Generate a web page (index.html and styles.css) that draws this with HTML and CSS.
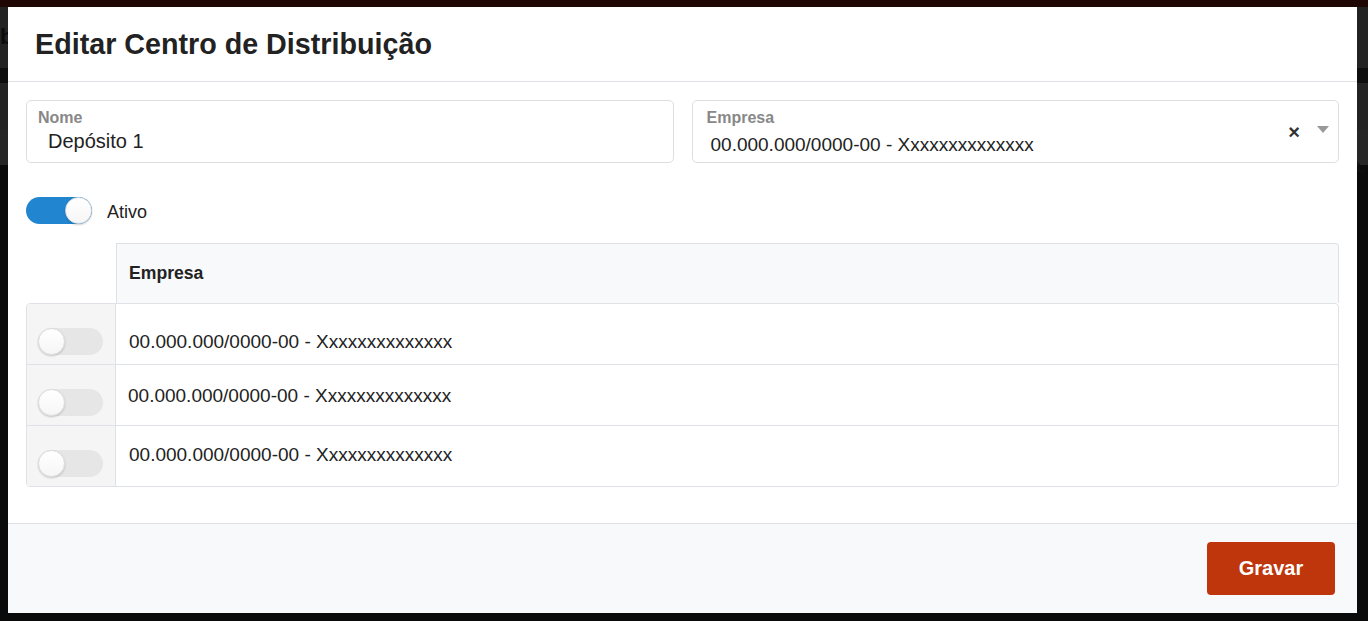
FILE: index.html
```html
<!DOCTYPE html>
<html lang="pt-BR">
<head>
  <meta charset="UTF-8" />
  <meta name="viewport" content="width=device-width, initial-scale=1.0"/>
  <title>Editar Centro de Distribuição</title>
  <link rel="stylesheet" href="styles.css">
</head>
<body>
  <!-- page behind the modal, already dimmed -->
  <div class="page">
    <div class="page-top"></div>
    <div class="page-nav"><span class="page-brand">b</span></div>
    <div class="page-sub"></div>
    <div class="page-tools"></div>
    <div class="page-band"><span class="page-band-text">a.</span></div>
  </div>

  <div class="modal">
    <div class="modal-header">
      <h1 class="modal-title">Editar Centro de Distribuição</h1>
    </div>

    <div class="modal-body">
      <div class="fields">
        <div class="field">
          <label class="field-label">Nome</label>
          <div class="field-value">Depósito 1</div>
        </div>
        <div class="field field-select">
          <label class="field-label">Empresa</label>
          <div class="field-value">00.000.000/0000-00 - Xxxxxxxxxxxxxx</div>
          <span class="select-clear">&times;</span>
          <span class="select-arrow"></span>
        </div>
      </div>

      <div class="switch-row">
        <span class="switch on"><span class="knob"></span></span>
        <span class="switch-label">Ativo</span>
      </div>

      <div class="grid">
        <div class="grid-head">
          <div class="grid-th">Empresa</div>
        </div>
        <div class="grid-body">
          <div class="grid-row">
            <div class="grid-check"><span class="switch"><span class="knob"></span></span></div>
            <div class="grid-cell first">00.000.000/0000-00 - Xxxxxxxxxxxxxx</div>
          </div>
          <div class="grid-row">
            <div class="grid-check"><span class="switch"><span class="knob"></span></span></div>
            <div class="grid-cell shifted">00.000.000/0000-00 - Xxxxxxxxxxxxxx</div>
          </div>
          <div class="grid-row">
            <div class="grid-check"><span class="switch"><span class="knob"></span></span></div>
            <div class="grid-cell last">00.000.000/0000-00 - Xxxxxxxxxxxxxx</div>
          </div>
        </div>
      </div>
    </div>

    <div class="modal-footer">
      <button class="btn-save">Gravar</button>
    </div>
  </div>
</body>
</html>
```

FILE: styles.css
```css
html, body {
  margin: 0;
  padding: 0;
  height: 100%;
  background-color: #0a0a0a;
  font-family: 'Liberation Sans', Arial, sans-serif;
  color: #222;
}

/* dimmed page behind */
.page-top {
  height: 7px;
  background-color: #1f0803;
}

.page-nav {
  height: 61px;
  background-color: #232323;
  display: flex;
  align-items: center;
}

.page-brand {
  font-size: 22px;
  font-weight: bold;
  color: #0b0b0b;
  margin-top: -2px;
}

.page-sub {
  height: 15px;
  background-color: #0e0e0e;
}

.page-tools {
  height: 47px;
  background-color: #232323;
}

.page-band {
  height: 35px;
  background-color: #262626;
  display: flex;
  justify-content: flex-end;
  align-items: flex-end;
}

.page-band-text {
  font-size: 18px;
  color: #111;
  padding-right: 2px;
  margin-bottom: -12px;
}

/* modal */
.modal {
  position: fixed;
  top: 7px;
  left: 8px;
  width: 1349px;
  height: 606px;
  background-color: #fff;
  display: flex;
  flex-direction: column;
}

.modal-header {
  height: 74px;
  border-bottom: 1px solid #dee2e6;
  display: flex;
  align-items: center;
  padding: 0 27px;
}

.modal-title {
  margin: 0;
  font-size: 28.7px;
  font-weight: bold;
  color: #222;
}

.modal-body {
  flex: 1;
  padding: 18px 18px 0 18px;
}

.fields {
  display: grid;
  grid-template-columns: 1fr 1fr;
  gap: 18px;
}

.field {
  position: relative;
  border: 1px solid #dedede;
  border-radius: 5px;
  padding: 8px 11px 0 11px;
  height: 53px;
}

.field-label {
  display: block;
  font-size: 16px;
  font-weight: bold;
  color: #888;
}

.field-value {
  font-size: 20px;
  padding-left: 10px;
  margin-top: 3px;
  color: #222;
}

.field-select .field-label {
  padding-left: 3px;
}

.field-select .field-value {
  font-size: 19px;
  padding-left: 7px;
  margin-top: 7px;
}

.select-clear {
  position: absolute;
  right: 38px;
  top: 20px;
  font-size: 20px;
  font-weight: bold;
  color: #333;
}

.select-arrow {
  position: absolute;
  right: 9px;
  top: 25px;
  width: 0;
  height: 0;
  border-left: 6px solid transparent;
  border-right: 6px solid transparent;
  border-top: 7px solid #999;
}

/* switches */
.switch-row {
  display: flex;
  align-items: center;
  gap: 15px;
  margin-top: 34px;
}

.switch {
  position: relative;
  display: inline-block;
  width: 65px;
  height: 27px;
  border-radius: 14px;
  background-color: #e6e6e6;
}

.switch.on {
  width: 66px;
  background-color: #2285d0;
}

.knob {
  position: absolute;
  top: 0;
  left: 0;
  width: 25px;
  height: 25px;
  border-radius: 50%;
  background: linear-gradient(#fff, #f6f6f6);
  border: 1px solid #dcdcdc;
  box-shadow: 0 1px 2px rgba(0, 0, 0, 0.2);
}

.switch.on .knob {
  left: auto;
  right: 0;
}

.switch-label {
  font-size: 18px;
  color: #222;
  margin-top: 4px;
}

/* grid */
.grid {
  margin-top: 19px;
}

.grid-head {
  padding-left: 90px;
}

.grid-th {
  height: 60px;
  border: 1px solid #dee2e6;
  border-bottom: none;
  border-radius: 0 4px 0 0;
  background-color: #f8f9fa;
  font-size: 17.6px;
  font-weight: bold;
  display: flex;
  align-items: center;
  padding-left: 12px;
  box-sizing: border-box;
}

.grid-body {
  border: 1px solid #dee2e6;
  border-radius: 4px;
  overflow: hidden;
}

.grid-row {
  display: grid;
  grid-template-columns: 89px 1fr;
  height: 60px;
  border-bottom: 1px solid #dee2e6;
}

.grid-row:last-child {
  border-bottom: none;
}

.grid-check {
  background-color: #f5f5f5;
  border-right: 1px solid #dee2e6;
  padding: 24px 0 0 11px;
}

.grid-check .switch {
  display: block;
}

.grid-cell {
  font-size: 19px;
  padding: 20px 0 0 13px;
}

.grid-cell.first {
  padding-top: 27px;
}

.grid-cell.shifted {
  padding-left: 12px;
}

.grid-cell.last {
  padding-top: 18px;
}

/* footer */
.modal-footer {
  height: 90px;
  border-top: 1px solid #dee2e6;
  background-color: #f8f9fa;
  display: flex;
  justify-content: flex-end;
  align-items: flex-start;
  padding: 18px 22px 0 0;
  box-sizing: border-box;
}

.btn-save {
  width: 128px;
  height: 53px;
  border: none;
  border-radius: 4px;
  background-color: #c0360c;
  color: #fff;
  font-family: 'Liberation Sans', Arial, sans-serif;
  font-size: 20px;
  font-weight: bold;
  cursor: pointer;
}
```
